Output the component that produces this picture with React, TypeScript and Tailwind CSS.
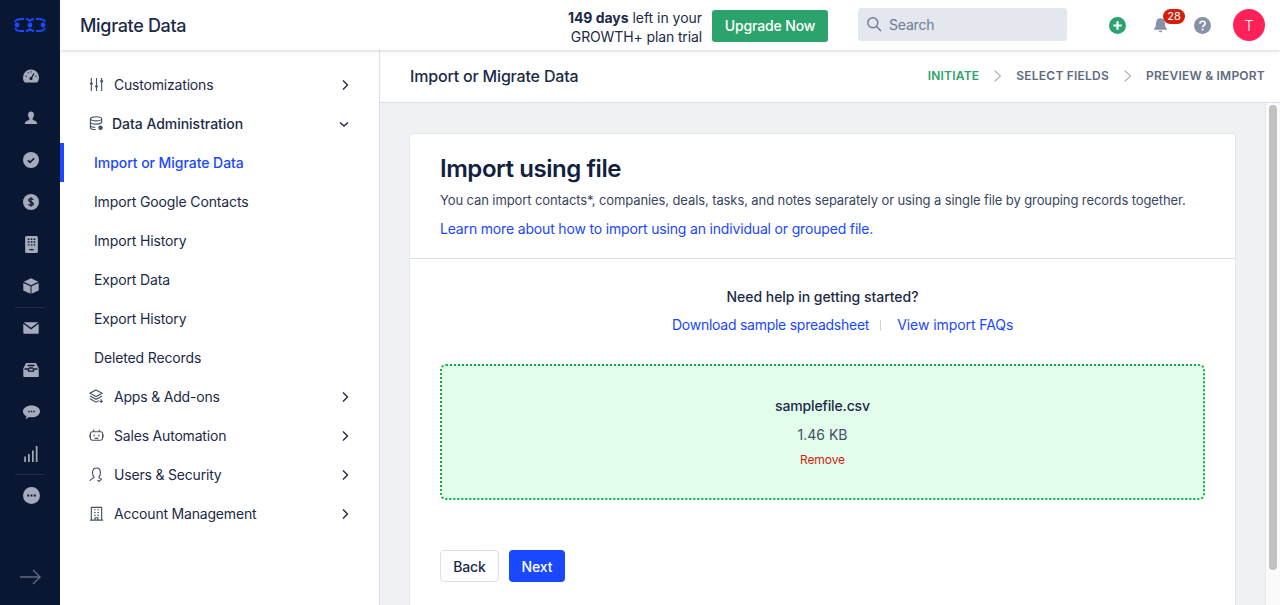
import React from "react";

function Chevron({ down }: { down?: boolean }) {
  return (
    <svg width="12" height="12" viewBox="0 0 12 12" fill="none" stroke="#1f2a44" strokeWidth="1.4" className={down ? "mr-[1px]" : ""}>
      {down ? <path d="M2 4.500l4 3.500 4-3.500" /> : <path d="M4 1.500L8.500 6 4 10.500" />}
    </svg>
  );
}

const side: Record<string, React.ReactNode> = {
  gauge: (
    <>
      <path d="M8 1.500a8 8 0 0 0-8 8c0 1.800.6 3.500 1.600 4.800.2.200.4.300.6.300h11.600c.3 0 .5-.1.6-.3A8 8 0 0 0 16 9.500a8 8 0 0 0-8-8z" />
      <path d="M8 10.500l3-5" stroke="#0a1733" strokeWidth="1.300" />
      <circle cx="8" cy="10.500" r="1.500" fill="#0a1733" />
      <path d="M2.500 8l1.200.5M5 4.200l.6 1.100M8 3.200v1.300M13.500 8l-1.200.5" stroke="#0a1733" strokeWidth="1" />
    </>
  ),
  user: <path d="M8 1.500c2 0 3 1.400 3 3.300 0 1.500-.7 2.800-1.400 3.600v1.200c0 .7 4.600 1.300 4.600 4.400H1.800c0-3.100 4.600-3.700 4.600-4.400V8.400C5.700 7.600 5 6.300 5 4.800 5 2.900 6 1.500 8 1.500z" />,
  check: (
    <>
      <circle cx="8" cy="8" r="8" />
      <path d="M4.800 8.200l2.200 2.200 4.200-4.200" fill="none" stroke="#0a1733" strokeWidth="1.600" />
    </>
  ),
  dollar: (
    <>
      <circle cx="8" cy="8" r="8" />
      <path d="M10.200 5.800C10 5 9.100 4.700 8 4.700c-1.200 0-2.200.5-2.200 1.600 0 2.300 4.500 1.100 4.500 3.400 0 1.100-1 1.600-2.300 1.600-1.200 0-2.100-.4-2.400-1.300M8 3.300v9.400" fill="none" stroke="#0a1733" strokeWidth="1.300" />
    </>
  ),
  building: (
    <>
      <rect x="2" y="0" width="12" height="16" rx="1.500" />
      <path d="M4.500 3h1.500M7.300 3h1.500M10 3h1.500M4.500 5.700h1.500M7.300 5.700h1.500M10 5.700h1.500M4.500 8.400h1.500M7.300 8.400h1.500M10 8.400h1.500M6 12.800h4" stroke="#0a1733" strokeWidth="1.300" />
    </>
  ),
  box: (
    <>
      <path d="M8 .3l7.300 3.500L8 7.300.7 3.800z" />
      <path d="M.3 5l7.200 3.300v7.400L.3 12.500zM15.700 5L8.500 8.300v7.400l7.200-3.200z" />
    </>
  ),
  mail: (
    <>
      <path d="M1.500 2.200h13c.3 0 .5.100.6.300L8 7.800 .9 2.500c.1-.2.300-.3.600-.3z" />
      <path d="M.3 3.800L8 9.500l7.700-5.700v9c0 .6-.5 1-1 1H1.300c-.5 0-1-.4-1-1z" />
    </>
  ),
  inbox: (
    <>
      <path d="M3 1h10l2.700 5.500v7.500c0 .6-.5 1-1 1H1.300c-.5 0-1-.4-1-1V6.500z" />
      <path d="M1.500 7h4v2.200h5V7h4M4.500 3.500h7M6 6h4" fill="none" stroke="#0a1733" strokeWidth="1.300" />
    </>
  ),
  chat: (
    <>
      <path d="M8 1.500c4.400 0 8 2.300 8 5.500s-3.600 5.500-8 5.500c-.9 0-1.700-.1-2.500-.3-.9.900-2 1.600-3.300 1.800.5-.7.900-1.500 1-2.500C1.300 10.500 0 8.900 0 7c0-3.200 3.600-5.500 8-5.500z" />
      <path d="M5 7h1.300M7.400 7h1.300M9.800 7h1.300" stroke="#0a1733" strokeWidth="1.400" />
    </>
  ),
  bars: <path d="M1.200 10.500h1.700V16H1.200zM5 8h1.700v8H5zM9 4.500h1.700V16H9zM12.800 0h1.700v16h-1.700z" />,
  more: (
    <>
      <circle cx="8" cy="8" r="8" />
      <path d="M4 8h1.800M7.100 8h1.800M10.200 8h1.800" stroke="#0a1733" strokeWidth="1.800" />
    </>
  ),
};

function SideIcon({ name, size = 16 }: { name: string; size?: number }) {
  return (
    <div className="h-[42px] pl-[2px] flex items-center justify-center">
      <svg width={size} height={size} viewBox="0 0 16 16" fill="#a4abbb">
        {side[name]}
      </svg>
    </div>
  );
}

const navIcons: Record<string, React.ReactNode> = {
  sliders: (
    <>
      <path d="M2.500 1v14M8 1v14M13.500 1v14" />
      <path d="M1 7h3M6.500 10h3M12 4.500h3" strokeWidth="2" />
    </>
  ),
  db: (
    <>
      <ellipse cx="7.500" cy="3" rx="6" ry="2.200" />
      <path d="M1.500 3v9.500c0 1.200 2.500 2 5.500 2M13.500 3v4.500M1.500 6.500c0 1.200 2.700 2.200 6 2.200 2.500 0 4.700-.6 5.600-1.500M1.500 10c0 1.200 2.500 2 5.300 2" />
      <circle cx="12.300" cy="12.500" r="1.800" fill="#475067" />
    </>
  ),
  layers: (
    <>
      <path d="M7.500 1L14 4.500 7.500 8 1 4.500z" />
      <path d="M1 7.500L7.500 11l6.500-3.500M1 10.500L7.500 14l3-1.600M13 11v4M11 13h4" />
    </>
  ),
  bot: (
    <>
      <rect x="1.500" y="4" width="13" height="9" rx="2" />
      <path d="M5 1.500V4M11 1.500V4M5.500 7v2M10.500 7v2M6 11h4M0 7v3M16 7v3" />
    </>
  ),
  users: (
    <path d="M1 15c0-2.500 3.800-2.600 4.500-4C4.300 9.800 3.800 8 3.800 6c0-3 1.800-5 4.200-5s4.200 2 4.200 5c0 2-.5 3.800-1.700 5 .3.700 1 1.200 2 1.500M9 14l1.700 1.500 3-3" />
  ),
  org: (
    <path d="M2.500 15V1.500h11V15M1 15h14M5.500 4h1.500M9 4h1.500M5.500 7h1.500M9 7h1.500M5.500 10h1.500M9 10h1.500M6.500 15v-2.500h3V15" />
  ),
};

function NavIcon({ name }: { name: string }) {
  return (
    <svg width="15" height="15" viewBox="0 0 16 16" fill="none" stroke="#475067" strokeWidth="1.200">
      {navIcons[name]}
    </svg>
  );
}

function TopItem({ icon, label, down, bold }: { icon: string; label: string; down?: boolean; bold?: boolean }) {
  return (
    <div className="h-[39px] flex items-center pl-[29px] pr-[28px] text-[14px] text-[#1c2a47]">
      <div className={bold ? "w-[23px] shrink-0" : "w-[25px] shrink-0"}>
        <NavIcon name={icon} />
      </div>
      <span className={bold ? "font-medium flex-1 tracking-[-0.03px]" : "flex-1 tracking-[-0.19px]"}>{label}</span>
      <Chevron down={down} />
    </div>
  );
}

function SubItem({ label, active }: { label: string; active?: boolean }) {
  return (
    <div
      className={
        active
          ? "h-[39px] flex items-center pl-[30px] text-[14px] font-medium tracking-[-0.05px] text-[#1a48ff] border-l-[4px] border-[#1a48ff]"
          : "h-[39px] flex items-center pl-[34px] text-[14px] tracking-[-0.14px] text-[#1c2a47]"
      }
    >
      {label}
    </div>
  );
}

function Step({ label, active }: { label: string; active?: boolean }) {
  return <span className={active ? "text-[#2ca36c]" : "text-[#5f6b82]"}>{label}</span>;
}

function StepChevron() {
  return (
    <svg width="10" height="14" viewBox="0 0 10 14" fill="none" stroke="#a9b0bf" strokeWidth="1.100" className="ml-[14px] mr-[13px]">
      <path d="M1.500 1.500L7.500 7l-6 5.500" />
    </svg>
  );
}

export default function App() {
  return (
    <div
      className="w-[1280px] h-[605px] overflow-hidden flex text-[#1c2a47]"
      style={{ fontFamily: "Inter, 'Liberation Sans', sans-serif" }}
    >
      <aside className="w-[60px] shrink-0 bg-[#0a1733] flex flex-col">
        <div className="h-[55px] flex items-start justify-center pt-[17px]">
          <svg width="32" height="16" viewBox="0 0 32 16" fill="none" stroke="#1a48ff" strokeWidth="1.800">
            <path d="M1 5Q2 2 7 2H10M12 2Q14 2 16 4Q18 2 20 2M22 2H25Q30 2 31 5M1 11Q2 14 7 14H10M12 14Q14 14 16 12Q18 14 20 14M22 14H25Q30 14 31 11" />
            <g fill="#1a48ff" stroke="none">
              <circle cx="3" cy="8" r="2.400" />
              <circle cx="16" cy="8" r="2.400" />
              <circle cx="29" cy="8" r="2.400" />
            </g>
          </svg>
        </div>
        <SideIcon name="gauge" />
        <SideIcon name="user" />
        <SideIcon name="check" />
        <SideIcon name="dollar" />
        <SideIcon name="building" size={17} />
        <SideIcon name="box" />
        <div className="h-px bg-[#1f2b47] mx-[15px] -mb-px" />
        <SideIcon name="mail" />
        <SideIcon name="inbox" />
        <SideIcon name="chat" size={17} />
        <SideIcon name="bars" />
        <div className="h-px bg-[#1f2b47] mx-[15px] -mb-px -mt-px" />
        <SideIcon name="more" size={17} />
        <div className="flex-1" />
        <div className="h-[56px] flex items-center justify-center">
          <svg width="22" height="16" viewBox="0 0 22 16" fill="none" stroke="#5f6b82" strokeWidth="1.400">
            <path d="M1 8h20M14 1l7 7-7 7" />
          </svg>
        </div>
      </aside>

      <div className="flex-1 min-w-0 flex flex-col">
        <header className="h-[50px] shrink-0 bg-white flex items-center pt-[2px] shadow-[0_1px_3px_rgba(70,80,120,0.25)] relative pr-[15px]">
          <h1 className="ml-[20px] -mt-px text-[18px] font-medium tracking-[-0.33px] text-[#1c2a47]">Migrate Data</h1>
          <div className="flex-1" />
          <div className="mt-px text-right text-[14px] leading-[19px] tracking-[-0.03px] text-[#1c2a47] mr-[10px]">
            <div>
              <span className="font-bold">149 days</span> left in your
            </div>
            <div className="tracking-[-0.12px]">GROWTH+ plan trial</div>
          </div>
          <button className="w-[116px] h-[32px] pb-[1px] rounded-[3px] bg-[#2ca36c] text-white text-[14px] font-medium tracking-[-0.15px] mr-[30px]">
            Upgrade Now
          </button>
          <div className="w-[209px] h-[33px] -mt-[3px] pb-[1px] rounded-[3px] bg-[#e5e7ee] flex items-center pl-[8px] text-[14px] tracking-[-0.2px] text-[#6b7a95] mr-[42px]">
            <svg width="16" height="16" viewBox="0 0 16 16" fill="none" stroke="#6b7a95" strokeWidth="1.400" className="mr-[7px]">
              <circle cx="6.800" cy="6.800" r="5" />
              <path d="M10.500 10.500l4.500 4.500" />
            </svg>
            Search
          </div>
          <svg width="17" height="17" viewBox="0 0 16 16" className="mr-[26px] -mt-[2px]">
            <circle cx="8" cy="8" r="8" fill="#2ca36c" />
            <path d="M8 4v8M4 8h8" stroke="#fff" strokeWidth="2" />
          </svg>
          <div className="relative w-[17px] h-[17px] mr-[25px] -mt-[2px] flex items-center justify-center">
            <svg width="15" height="16" viewBox="0 0 16 16" fill="#8891a5">
              <path d="M8 0.800c-3 0-4.700 2.200-4.700 5 0 3.200-.8 4.700-2.200 6.200v1h13.800v-1c-1.400-1.500-2.200-3-2.200-6.200 0-2.800-1.700-5-4.700-5zM6 14.200h4c0 1-.9 1.600-2 1.600s-2-.6-2-1.600z" />
            </svg>
            <span className="absolute left-[11px] top-[-8px] w-[22px] h-[15px] rounded-full bg-[#d21e0b] text-white text-[11px] leading-[15px] text-center">
              28
            </span>
          </div>
          <svg width="17" height="17" viewBox="0 0 16 16" className="mr-[22px] -mt-[2px]">
            <circle cx="8" cy="8" r="8" fill="#8891a5" />
            <path d="M5.600 6.300C5.700 4.800 6.700 4 8.100 4c1.400 0 2.400.8 2.400 2 0 1.900-2.400 1.800-2.400 3.700" fill="none" stroke="#fff" strokeWidth="1.600" />
            <circle cx="8.100" cy="11.800" r="1" fill="#fff" />
          </svg>
          <div className="w-[32px] h-[32px] -mt-[2px] rounded-full bg-[#ff2158] text-white text-[14px] font-light flex items-center justify-center">
            T
          </div>
        </header>

        <div className="flex-1 min-h-0 flex">
          <nav className="w-[320px] shrink-0 bg-white border-r border-[#dcdfe7] pt-[15px]">
            <TopItem icon="sliders" label="Customizations" />
            <TopItem icon="db" label="Data Administration" down bold />
            <SubItem label="Import or Migrate Data" active />
            <SubItem label="Import Google Contacts" />
            <SubItem label="Import History" />
            <SubItem label="Export Data" />
            <SubItem label="Export History" />
            <SubItem label="Deleted Records" />
            <TopItem icon="layers" label="Apps & Add-ons" />
            <TopItem icon="bot" label="Sales Automation" />
            <TopItem icon="users" label="Users & Security" />
            <TopItem icon="org" label="Account Management" />
          </nav>

          <main className="flex-1 min-w-0 flex flex-col">
            <div className="h-[53px] shrink-0 bg-white border-b border-[#dcdfe7] flex items-center pb-[1px] pl-[30px] pr-[15px]">
              <h2 className="text-[16px] font-medium tracking-[-0.18px] text-[#1c2a47]">Import or Migrate Data</h2>
              <div className="flex-1" />
              <div className="flex items-center text-[12px] font-semibold tracking-[0.22px]">
                <Step label="INITIATE" active />
                <StepChevron />
                <Step label="SELECT FIELDS" />
                <StepChevron />
                <Step label="PREVIEW & IMPORT" />
              </div>
            </div>

            <div className="flex-1 min-h-0 flex bg-[#f0f1f5] overflow-hidden">
              <div className="flex-1 min-w-0 pl-[29px] pt-[30px]">
                <section className="w-[827px] h-[600px] bg-white rounded-[4px] border border-[#e4e6ec]">
                  <div className="h-[125px] px-[30px] pt-[20px] border-b border-[#dcdfe7]">
                    <h3 className="text-[24px] leading-[30px] font-semibold tracking-[-0.44px] text-[#12203f]">Import using file</h3>
                    <p className="mt-[6px] text-[13px] leading-[20px] tracking-[-0.1px] text-[#3a4660]">
                      You can import contacts*, companies, deals, tasks, and notes separately or using a single file by grouping records together.
                    </p>
                    <p className="mt-[9px] text-[14px] leading-[20px] tracking-[-0.17px] text-[#1a48ff]">
                      Learn more about how to import using an individual or grouped file.
                    </p>
                  </div>
                  <div className="px-[30px]">
                    <div className="pt-[28px]">
                      <div className="text-center text-[14px] leading-[20px] font-medium tracking-[-0.03px] text-[#1c2a47]">Need help in getting started?</div>
                      <div className="mt-[8px] pl-[232px] text-[14px] leading-[20px] flex items-center text-[#1a48ff]">
                        <span className="tracking-[-0.26px]">Download sample spreadsheet</span>
                        <span className="ml-[11px] mr-[16px] w-px h-[11px] bg-[#cfd3dc]" />
                        <span className="tracking-[-0.07px]">View import FAQs</span>
                      </div>
                    </div>
                    <div className="mt-[29px] h-[136px] rounded-[6px] border-2 border-dotted border-[#12b03c] bg-[#e3fdec] flex flex-col items-center pt-[30px]">
                      <div className="text-[14px] leading-[20px] font-medium tracking-[-0.15px] text-[#1c2a47]">samplefile.csv</div>
                      <div className="mt-[9px] text-[14px] leading-[20px] text-[#475067]">1.46 KB</div>
                      <div className="mt-[7px] text-[12px] leading-[16px] tracking-[-0.1px] text-[#d21e0b]">Remove</div>
                    </div>
                    <div className="mt-[50px] flex gap-[10px]">
                      <button className="w-[59px] h-[32px] rounded-[4px] border border-[#dcdfe7] bg-white text-[14px] font-medium tracking-[-0.1px] text-[#1c2a47]">Back</button>
                      <button className="w-[56px] h-[32px] rounded-[4px] bg-[#1a48ff] text-white text-[14px] font-medium tracking-[-0.1px]">Next</button>
                    </div>
                  </div>
                </section>
              </div>
              <div className="w-[15px] shrink-0 bg-[#fafafa] border-l border-[#e8e8e8] pt-[2px] flex justify-center">
                <div className="w-[8px] h-[465px] rounded-full bg-[#c1c1c1]" />
              </div>
            </div>
          </main>
        </div>
      </div>
    </div>
  );
}
